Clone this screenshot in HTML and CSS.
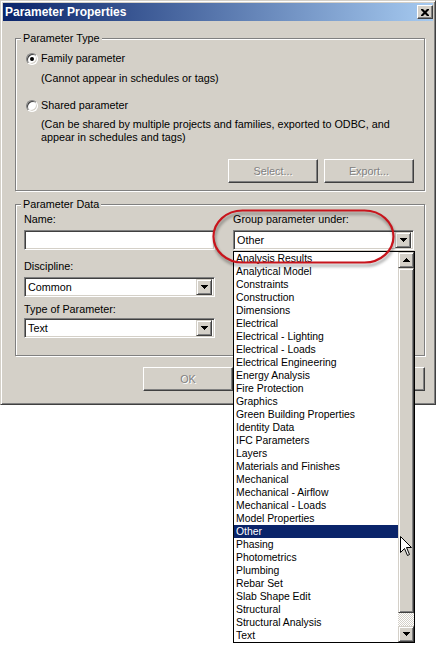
FILE: index.html
```html
<!DOCTYPE html>
<html>
<head>
<meta charset="utf-8">
<title>Parameter Properties</title>
<link rel="stylesheet" href="styles.css">
</head>
<body>
<div class="window">
  <div class="titlebar">
    <span class="title">Parameter Properties</span>
    <span class="close"><svg width="8" height="7" viewBox="0 0 8 7"><path d="M0 0h2l2 2 2-2h2v1l-2.5 2.5 2.5 2.5v1h-2l-2-2-2 2h-2v-1l2.5-2.5-2.5-2.5z" fill="#000"/></svg></span>
  </div>
  <div class="content">
    <fieldset class="group g1">
      <legend>Parameter Type</legend>
      <div class="gbody g1body">
        <div class="radio-row r1"><span class="radio checked"></span><span class="rtext">Family parameter</span></div>
        <div class="note n1">(Cannot appear in schedules or tags)</div>
        <div class="radio-row r2"><span class="radio"></span><span class="rtext">Shared parameter</span></div>
        <div class="note n2">(Can be shared by multiple projects and families, exported to ODBC, and<br>appear in schedules and tags)</div>
        <div class="btn-row"><div class="btn disabled">Select...</div><div class="btn disabled">Export...</div></div>
      </div>
    </fieldset>
    <fieldset class="group g2">
      <legend>Parameter Data</legend>
      <div class="gbody cols">
        <div class="col left">
          <div class="lbl l-name">Name:</div>
          <div class="field"></div>
          <div class="lbl l-disc">Discipline:</div>
          <div class="field select"><span class="val">Common</span><span class="arrow"><svg width="7" height="4" viewBox="0 0 7 4"><path d="M0 0h7v1h-1v1h-1v1h-1v1h-1v-1h-1v-1h-1v-1h-1z" fill="#000"/></svg></span></div>
          <div class="lbl l-type">Type of Parameter:</div>
          <div class="field select f-type"><span class="val">Text</span><span class="arrow"><svg width="7" height="4" viewBox="0 0 7 4"><path d="M0 0h7v1h-1v1h-1v1h-1v1h-1v-1h-1v-1h-1v-1h-1z" fill="#000"/></svg></span></div>
        </div>
        <div class="col right">
          <div class="lbl l-name">Group parameter under:</div>
          <div class="field select"><span class="val">Other</span><span class="arrow"><svg width="7" height="4" viewBox="0 0 7 4"><path d="M0 0h7v1h-1v1h-1v1h-1v1h-1v-1h-1v-1h-1v-1h-1z" fill="#000"/></svg></span></div>
        </div>
      </div>
    </fieldset>
    <div class="dlg-buttons">
      <div class="btn disabled">OK</div>
      <div class="btn covered">Cancel</div>
      <div class="btn covered">Help</div>
    </div>
  </div>
</div>

<div class="dropdown">
  <div class="items">
    <div class="item">Analysis Results</div>
    <div class="item">Analytical Model</div>
    <div class="item">Constraints</div>
    <div class="item">Construction</div>
    <div class="item">Dimensions</div>
    <div class="item">Electrical</div>
    <div class="item">Electrical - Lighting</div>
    <div class="item">Electrical - Loads</div>
    <div class="item">Electrical Engineering</div>
    <div class="item">Energy Analysis</div>
    <div class="item">Fire Protection</div>
    <div class="item">Graphics</div>
    <div class="item">Green Building Properties</div>
    <div class="item">Identity Data</div>
    <div class="item">IFC Parameters</div>
    <div class="item">Layers</div>
    <div class="item">Materials and Finishes</div>
    <div class="item">Mechanical</div>
    <div class="item">Mechanical - Airflow</div>
    <div class="item">Mechanical - Loads</div>
    <div class="item">Model Properties</div>
    <div class="item sel">Other</div>
    <div class="item">Phasing</div>
    <div class="item">Photometrics</div>
    <div class="item">Plumbing</div>
    <div class="item">Rebar Set</div>
    <div class="item">Slab Shape Edit</div>
    <div class="item">Structural</div>
    <div class="item">Structural Analysis</div>
    <div class="item">Text</div>
  </div>
  <div class="scroll">
    <div class="sb-btn"><svg width="7" height="4" viewBox="0 0 7 4"><path d="M3 0h1v1h1v1h1v1h1v1h-7v-1h1v-1h1v-1h1z" fill="#000"/></svg></div>
    <div class="thumb"></div>
    <div class="track"></div>
    <div class="sb-btn"><svg width="7" height="4" viewBox="0 0 7 4"><path d="M0 0h7v1h-1v1h-1v1h-1v1h-1v-1h-1v-1h-1v-1h-1z" fill="#000"/></svg></div>
  </div>
</div>

<svg class="annot" width="200" height="72" viewBox="0 0 200 72">
  <rect class="ring" x="8.5" y="7.5" width="180" height="52" rx="29" ry="26"/>
</svg>

<svg class="cursor" width="14" height="22" viewBox="0 0 14 22">
  <path d="M0.5 0.5 V16.5 L4.5 12.5 L7.5 19.5 L9.5 18.5 L6.5 11.5 H11.5 Z" fill="#fff" stroke="#000" stroke-width="1" stroke-linejoin="miter"/>
</svg>
</body>
</html>
```

FILE: styles.css
```css
* { box-sizing: border-box; }
html, body { margin: 0; padding: 0; background: #fff; }
body {
  position: relative;
  width: 436px;
  height: 647px;
  overflow: hidden;
  font-family: "Liberation Sans", Arial, sans-serif;
  font-size: 10.8px;
  color: #000;
}

.window {
  width: 436px;
  height: 405px;
  background: #d4d0c8;
  border: 1px solid;
  border-color: #d4d0c8 #404040 #404040 #d4d0c8;
  box-shadow: inset 1px 1px #fff, inset -1px -1px #808080;
  padding: 2px;
}

.titlebar {
  height: 18px;
  background: linear-gradient(to right, #0a246a, #a6caf0);
  display: flex;
  align-items: center;
  justify-content: space-between;
  padding: 0 0 0 2px;
}
.title {
  color: #fff;
  font-weight: bold;
  font-size: 12px;
  line-height: 18px;
}
.close {
  width: 16px;
  height: 14px;
  background: #d4d0c8;
  border: 1px solid;
  border-color: #fff #404040 #404040 #fff;
  box-shadow: inset -1px -1px #808080;
  display: flex;
  align-items: center;
  justify-content: center;
}
.close svg { display: block; }

.content {
  padding: 0 8px 0 12px;
}

.group {
  margin: 0;
  padding: 0;
  min-width: 0;
  border: 1px solid #808080;
  box-shadow: inset 1px 1px #fff, 1px 1px #fff;
}
.group legend {
  margin-left: 5px;
  padding: 0 2px;
  line-height: 14px;
  background: #d4d0c8;
}
.g1 { margin-top: 10px; }
.g2 { margin-top: 6px; }

.g1body {
  padding: 7px 10px 7px 10px;
  line-height: 13px;
}
.radio-row {
  display: flex;
  align-items: center;
  height: 13px;
}
.r2 { margin-top: 14px; }
.radio {
  position: relative;
  width: 12px;
  height: 12px;
  border-radius: 50%;
  background: #fff;
  border: 1px solid;
  border-color: #808080 #fff #fff #808080;
  box-shadow: inset 1px 1px #404040, inset -1px -1px #d4d0c8;
}
.radio.checked::after {
  content: "";
  position: absolute;
  left: 3px;
  top: 3px;
  width: 4px;
  height: 4px;
  border-radius: 50%;
  background: #000;
}
.rtext { margin-left: 3px; }
.note { margin-left: 15px; }
.n1 { margin-top: 7px; }
.n2 { margin-top: 6px; }

.btn-row {
  display: flex;
  justify-content: flex-end;
  gap: 6px;
  margin-top: 15px;
}
.btn {
  width: 90px;
  height: 24px;
  background: #d4d0c8;
  border: 1px solid;
  border-color: #fff #404040 #404040 #fff;
  box-shadow: inset -1px -1px #808080;
  display: flex;
  align-items: center;
  justify-content: center;
}
.btn.disabled {
  color: #808080;
  text-shadow: 1px 1px #fff;
}
.btn.covered { color: transparent; }

.cols {
  display: flex;
  gap: 18px;
  padding: 2px 10px 17px 8px;
}
.col { display: flex; flex-direction: column; }
.col.left { width: 191px; }
.col.right { width: 181px; }
.lbl { line-height: 13px; height: 13px; }
.l-disc { margin-top: 10px; }
.l-type { margin-top: 6px; }
.field {
  margin-top: 4px;
  height: 20px;
  background: #fff;
  border: 1px solid;
  border-color: #808080 #fff #fff #808080;
  box-shadow: inset 1px 1px #404040, inset -1px -1px #d4d0c8;
  padding: 2px;
  display: flex;
  align-items: center;
  justify-content: space-between;
}
.f-type { margin-top: 2px; }
.val { padding-left: 1px; line-height: 16px; }
.arrow {
  width: 16px;
  height: 16px;
  background: #d4d0c8;
  border: 1px solid;
  border-color: #d4d0c8 #404040 #404040 #d4d0c8;
  box-shadow: inset 1px 1px #fff, inset -1px -1px #808080;
  display: flex;
  align-items: center;
  justify-content: center;
}
.arrow svg, .sb-btn svg { display: block; }

.dlg-buttons {
  display: flex;
  justify-content: flex-end;
  gap: 6px;
  margin-top: 11px;
}

.dropdown {
  position: absolute;
  left: 233px;
  top: 251px;
  width: 182px;
  height: 392px;
  border: 1px solid #000;
  background: #fff;
  display: flex;
  font-size: 10.4px;
}
.items { flex: 1; min-width: 0; }
.item {
  height: 13px;
  line-height: 13px;
  padding-left: 2px;
  white-space: nowrap;
}
.item.sel { background: #0a246a; color: #fff; }
.scroll {
  width: 16px;
  display: flex;
  flex-direction: column;
}
.sb-btn, .thumb {
  background: #d4d0c8;
  border: 1px solid;
  border-color: #d4d0c8 #404040 #404040 #d4d0c8;
  box-shadow: inset 1px 1px #fff, inset -1px -1px #808080;
}
.sb-btn {
  height: 16px;
  display: flex;
  align-items: center;
  justify-content: center;
}
.thumb { height: 345px; }
.track {
  flex: 1;
  background: repeating-conic-gradient(#d4d0c8 0 25%, #fff 0 50%) 0 0 / 2px 2px;
}

.annot {
  position: absolute;
  left: 205px;
  top: 203px;
  overflow: visible;
}
.ring {
  fill: none;
  stroke: #c8141c;
  stroke-width: 2.2;
  filter: drop-shadow(1px 3px 1.5px rgba(0, 0, 0, 0.4));
}

.cursor {
  position: absolute;
  left: 400px;
  top: 536px;
}
```
